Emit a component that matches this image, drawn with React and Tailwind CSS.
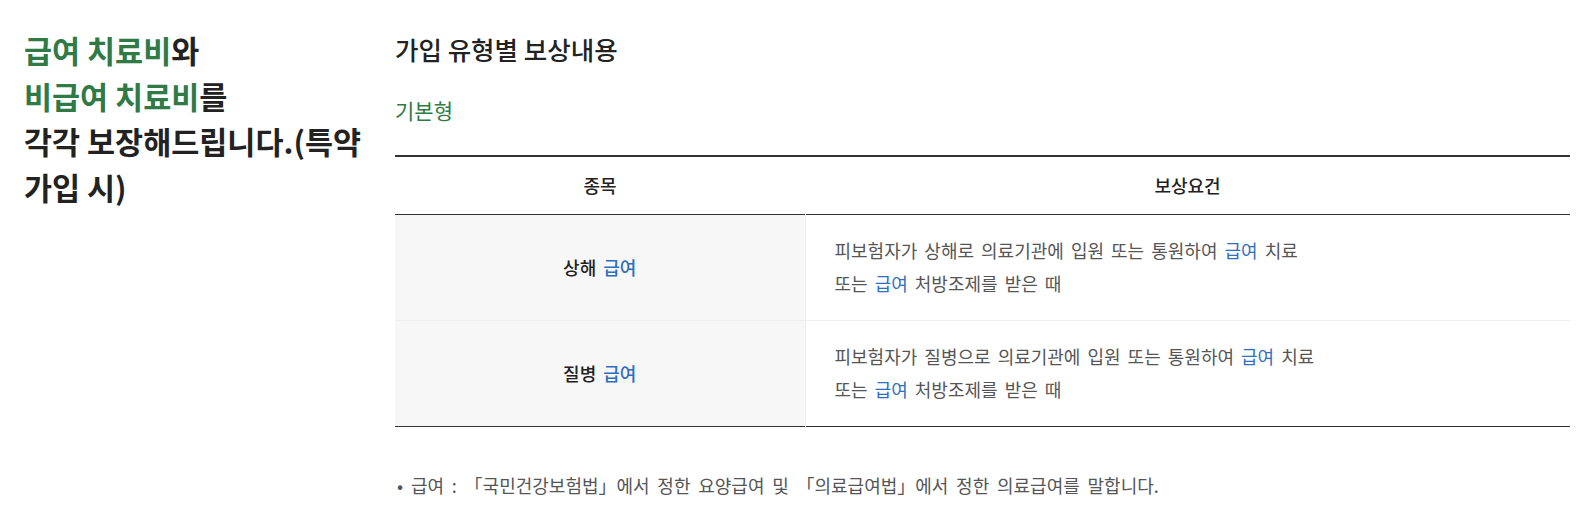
import React from "react";

const Blue = ({ children }) => <span className="text-[#2f6fc0]">{children}</span>;

const rows = [
  { name: "상해", cause: "상해로" },
  { name: "질병", cause: "질병으로" },
];

const App = () => {
  return (
    <div
      className="flex w-full h-[524px] bg-white pt-7 text-[#222]"
      style={{ fontFamily: '"Noto Sans CJK KR", "Noto Sans", sans-serif' }}
    >
      <div className="w-[395px] shrink-0 pl-6">
        <h2 className="text-[30.5px] font-bold leading-[45.5px] text-[#222]">
          <span className="text-[#2f7a45]">급여 치료비</span>와
          <br />
          <span className="text-[#2f7a45]">비급여 치료비</span>를
          <br />
          각각 보장해드립니다.(특약
          <br />
          가입 시)
        </h2>
      </div>

      <div className="w-[1175px] shrink-0">
        <h3 className="mt-[3px] text-[25.5px] font-medium leading-[36px] text-[#222]">
          가입 유형별 보상내용
        </h3>
        <p className="mt-[28px] text-[21px] leading-[30px] text-[#2f7a45]">기본형</p>

        <table className="mt-[30px] w-full border-collapse border-t-2 border-b border-[#333] [word-spacing:3px]">
          <thead>
            <tr className="border-b border-[#333]">
              <th className="w-[410px] h-[58px] text-[18px] font-medium text-[#222]">종목</th>
              <th className="h-[58px] text-[18px] font-medium text-[#222]">보상요건</th>
            </tr>
          </thead>
          <tbody>
            {rows.map((r, i) => (
              <tr key={r.name} className={i === 0 ? "border-b border-[#eeeeee]" : ""}>
                <td className="h-[106px] bg-[#f7f7f7] border-r border-[#eeeeee] text-center text-[18px] font-medium text-[#222]">
                  {r.name} <Blue>급여</Blue>
                </td>
                <td className="h-[106px] pl-[29px] text-[18px] leading-[33px] text-[#555]">
                  피보험자가 {r.cause} 의료기관에 입원 또는 통원하여 <Blue>급여</Blue> 치료
                  <br />
                  또는 <Blue>급여</Blue> 처방조제를 받은 때
                </td>
              </tr>
            ))}
          </tbody>
        </table>

        <ul className="mt-[45px] text-[18px] leading-[26px] text-[#555] [word-spacing:3.7px]">
          <li className="flex">
            <span className="w-[16px] pl-[2px]">•</span>
            <span>급여 : 「국민건강보험법」에서 정한 요양급여 및 「의료급여법」에서 정한 의료급여를 말합니다.</span>
          </li>
        </ul>
      </div>
    </div>
  );
};

export default App;
